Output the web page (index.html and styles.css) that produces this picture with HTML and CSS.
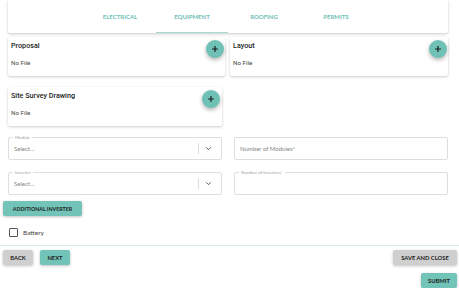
FILE: index.html
```html
<!DOCTYPE html>
<html lang="en">
<head>
    <meta charset="UTF-8">
    <meta name="viewport" content="width=device-width, initial-scale=1.0">
    <title>Project Equipment</title>
    <link rel="stylesheet" href="styles.css">
</head>
<body>
    <nav class="tabs">
        <div class="tab-list">
            <a class="tab">Electrical</a>
            <a class="tab active">Equipment</a>
            <a class="tab">Roofing</a>
            <a class="tab">Permits</a>
        </div>
    </nav>

    <div class="docs-row">
        <div class="doc-card">
            <div class="doc-info">
                <div class="doc-title">Proposal</div>
                <div class="doc-file">No File</div>
            </div>
            <button class="fab">
                <svg viewBox="0 0 24 24" width="10" height="10"><path d="M12 5v14M5 12h14" stroke="#1c1c1c" stroke-width="2.8" fill="none"/></svg>
            </button>
        </div>
        <div class="doc-card wide">
            <div class="doc-info">
                <div class="doc-title">Layout</div>
                <div class="doc-file">No File</div>
            </div>
            <button class="fab">
                <svg viewBox="0 0 24 24" width="10" height="10"><path d="M12 5v14M5 12h14" stroke="#1c1c1c" stroke-width="2.8" fill="none"/></svg>
            </button>
        </div>
    </div>

    <div class="docs-row second">
        <div class="doc-card survey">
            <div class="doc-info">
                <div class="doc-title">Site Survey Drawing</div>
                <div class="doc-file">No File</div>
            </div>
            <button class="fab">
                <svg viewBox="0 0 24 24" width="10" height="10"><path d="M12 5v14M5 12h14" stroke="#1c1c1c" stroke-width="2.8" fill="none"/></svg>
            </button>
        </div>
    </div>

    <div class="field-row">
        <div class="field">
            <span class="field-label">Module</span>
            <span class="select-value">Select...</span>
            <span class="select-sep"></span>
            <svg class="chevron" viewBox="0 0 24 24" width="9" height="9"><path d="M6 9l6 6 6-6" stroke="#444" stroke-width="2.4" fill="none"/></svg>
        </div>
        <div class="field">
            <span class="placeholder">Number of Modules*</span>
        </div>
    </div>

    <div class="field-row">
        <div class="field">
            <span class="field-label">Inverter</span>
            <span class="select-value">Select...</span>
            <span class="select-sep"></span>
            <svg class="chevron" viewBox="0 0 24 24" width="9" height="9"><path d="M6 9l6 6 6-6" stroke="#444" stroke-width="2.4" fill="none"/></svg>
        </div>
        <div class="field">
            <span class="field-label">Number of Inverters*</span>
        </div>
    </div>

    <div class="extra">
        <button class="btn teal">Additional Inverter</button>
    </div>

    <label class="check">
        <span class="box"></span>
        Battery
    </label>

    <div class="actions">
        <div class="left-actions">
            <button class="btn grey">Back</button>
            <button class="btn teal">Next</button>
        </div>
        <div class="right-actions">
            <button class="btn grey">Save and Close</button>
            <button class="btn teal">Submit</button>
        </div>
    </div>
</body>
</html>
```

FILE: styles.css
```css
body {
    font-family: 'Lato', sans-serif;
    margin: 0;
    padding: 0;
    background-color: #fff;
    color: #333;
    width: 459px;
    overflow: hidden;
}

.tabs {
    margin: 0 11px 0 8px;
    height: 33px;
    background: #fff;
    box-shadow: 0 1px 3px rgba(0, 0, 0, 0.22);
    border-radius: 0 0 2px 2px;
    display: flex;
    justify-content: center;
}

.tab-list {
    display: flex;
}

.tab {
    width: 72px;
    height: 33px;
    display: flex;
    align-items: center;
    justify-content: center;
    font-size: 6px;
    font-weight: 700;
    text-transform: uppercase;
    color: #6fc0b5;
    box-sizing: border-box;
}

.tab.active {
    border-bottom: 1px solid #a6d9d2;
    padding-top: 1px;
}

.docs-row {
    display: flex;
    gap: 5px;
    margin: 4px 11px 0 8px;
}

.docs-row.second {
    margin-top: 11px;
}

.doc-card {
    width: 217px;
    height: 39px;
    box-sizing: border-box;
    padding: 3px 1px 0 3px;
    background: #fff;
    border-radius: 2px;
    box-shadow: 0 1px 3px rgba(0, 0, 0, 0.2);
    display: flex;
    justify-content: space-between;
    align-items: flex-start;
}

.doc-card.wide {
    width: 218px;
}

.doc-card.survey {
    width: 214px;
    padding-right: 2px;
}

.doc-title {
    font-family: 'Roboto', sans-serif;
    font-size: 7.2px;
    font-weight: 500;
    line-height: 10px;
    padding-top: 1px;
    color: #222;
}

.doc-file {
    font-family: 'Roboto', sans-serif;
    font-size: 6.2px;
    line-height: 8px;
    margin-top: 8px;
    color: #444;
}

.fab {
    width: 18px;
    height: 18px;
    border-radius: 50%;
    border: none;
    padding: 0;
    background: #6fc1b6;
    box-shadow: 0 2px 4px rgba(0, 0, 0, 0.3);
    display: flex;
    align-items: center;
    justify-content: center;
}

.field-row {
    display: flex;
    gap: 12px;
    margin: 11px 11px 0 8px;
}

.field-row + .field-row {
    margin-top: 12px;
}

.field {
    position: relative;
    width: 214px;
    height: 23px;
    box-sizing: border-box;
    border: 1px solid #dedede;
    border-radius: 2px;
    display: flex;
    align-items: center;
    padding: 0 5px;
}

.field-label {
    position: absolute;
    top: -3px;
    left: 4px;
    padding: 0 2px;
    background: #fff;
    font-size: 4.5px;
    line-height: 5px;
    color: #a0a0a0;
}

.select-value,
.placeholder {
    font-size: 6px;
    color: #858585;
    flex: 1;
}

.select-sep {
    width: 1px;
    height: 11px;
    background: #ddd;
    margin-right: 5px;
}

.chevron {
    margin-right: 3px;
}

.extra {
    display: flex;
    margin: 6px 0 0 3px;
}

.btn {
    height: 15px;
    border: none;
    border-radius: 2px;
    padding: 0 6px;
    font-family: 'Lato', sans-serif;
    font-size: 5.8px;
    font-weight: 700;
    text-transform: uppercase;
    white-space: nowrap;
    color: #222;
    box-shadow: 0 1px 3px rgba(0, 0, 0, 0.25);
    cursor: pointer;
}

.btn.teal {
    background: #72c3b8;
}

.btn.grey {
    background: #cfcfcf;
}

.extra .btn {
    width: 79px;
    padding: 0;
    font-size: 5.3px;
}

.check {
    display: flex;
    align-items: center;
    gap: 5px;
    margin: 12px 0 0 9px;
    font-size: 6.5px;
    color: #444;
}

.box {
    width: 7px;
    height: 7px;
    border: 1px solid #555;
    border-radius: 1px;
}

.actions {
    margin-top: 8px;
    border-top: 1px solid #d6eaec;
    padding: 4px 2px 0 3px;
    display: flex;
    justify-content: space-between;
    align-items: flex-start;
}

.left-actions {
    display: flex;
    gap: 7px;
}

.left-actions .btn {
    width: 30px;
    padding: 0;
}

.right-actions {
    display: flex;
    flex-direction: column;
    align-items: flex-end;
    gap: 8px;
}

.right-actions .btn.grey {
    width: 64px;
    padding: 0;
}

.right-actions .btn.teal {
    width: 36px;
    padding: 0;
}
```
